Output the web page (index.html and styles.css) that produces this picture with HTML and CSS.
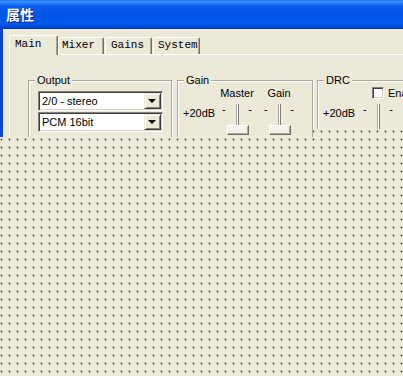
FILE: index.html
```html
<!DOCTYPE html>
<html lang="zh">
<head>
    <meta charset="UTF-8">
    <meta name="viewport" content="width=device-width, initial-scale=1.0">
    <title>属性</title>
    <link rel="stylesheet" href="styles.css">
</head>
<body>
    <div class="window">
        <div class="titlebar"><span class="title">属性</span></div>
        <div class="frame">
            <div class="tabs">
                <div class="tab active">Main</div>
                <div class="tab tab-mixer">Mixer</div>
                <div class="tab tab-gains">Gains</div>
                <div class="tab tab-system">System</div>
            </div>
            <div class="page">
                <fieldset class="group output">
                    <legend>Output</legend>
                    <div class="combo"><span class="value">2/0 - stereo</span><span class="drop"></span></div>
                    <div class="combo"><span class="value">PCM 16bit</span><span class="drop"></span></div>
                </fieldset>
                <fieldset class="group gain">
                    <legend>Gain</legend>
                    <div class="sliders">
                        <div class="db">+20dB</div>
                        <div class="slider">
                            <div class="cap">Master</div>
                            <div class="rail"><span>-</span><span class="track"></span><span>-</span></div>
                            <div class="thumb"></div>
                        </div>
                        <div class="slider second">
                            <div class="cap">Gain</div>
                            <div class="rail"><span>-</span><span class="track"></span><span>-</span></div>
                            <div class="thumb"></div>
                        </div>
                    </div>
                </fieldset>
                <fieldset class="group drc">
                    <legend>DRC</legend>
                    <div class="sliders">
                        <div class="db">+20dB</div>
                        <div class="slider">
                            <div class="cap check-cap"><span class="checkbox"></span>Enable</div>
                            <div class="rail long"><span>-</span><span class="track"></span><span>-</span></div>
                        </div>
                    </div>
                </fieldset>
            </div>
        </div>
    </div>
</body>
</html>
```

FILE: styles.css
```css
body {
    margin: 0;
    width: 403px;
    height: 376px;
    overflow: hidden;
    font-family: "Liberation Sans", Arial, sans-serif;
    font-size: 11px;
    color: #000;
    background-color: #ece9d8;
    background-image: radial-gradient(circle at 1.5px 3.5px, #55544a 0.7px, rgba(236, 233, 216, 0) 1.3px);
    background-size: 8px 8px;
}

.window {
    height: 137px;
    overflow: hidden;
    background: #ece9d8;
    clip-path: polygon(0 0, 100% 0, 100% 129px, 313px 129px, 313px 100%, 0 100%);
}

.titlebar {
    height: 29px;
    display: flex;
    align-items: center;
    padding-left: 6px;
    background: linear-gradient(180deg, #0a5fe9 0, #4096ff 1px, #2d80f8 3px, #0a5ded 6px, #0055e5 50%, #0059ee 84%, #0049d2 93%, #003ab0 100%);
}

.title {
    color: #fff;
    font-family: "Noto Sans CJK SC", sans-serif;
    font-weight: 700;
    font-size: 14px;
    line-height: 15px;
    text-shadow: 1px 1px 0 #0a1c8a;
}

.frame {
    height: 108px;
    border-left: 3px solid #0b47d6;
    padding: 6px 0 0 6px;
}

.tabs {
    display: flex;
    align-items: flex-end;
    height: 19px;
}

.tab {
    box-sizing: border-box;
    height: 17px;
    padding-left: 4px;
    font-family: "Liberation Mono", monospace;
    font-size: 11px;
    line-height: 15px;
    color: #000;
    background: #ece9d8;
    border-top: 1px solid #fff;
    border-left: 1px solid #fff;
    border-right: 1px solid #716f64;
    border-radius: 2px 2px 0 0;
    box-shadow: inset -1px 0 0 #aca899;
}

.tab.active {
    position: relative;
    z-index: 1;
    width: 49px;
    height: 20px;
    margin-bottom: -1px;
    padding-left: 5px;
    line-height: 17px;
}

.tab-mixer {
    width: 46px;
    padding-left: 3px;
}

.tab-gains {
    width: 47px;
    margin-left: 1px;
    padding-left: 5px;
}

.tab-system {
    width: 47px;
    margin-left: 1px;
    padding-left: 4px;
}

.page {
    display: flex;
    align-items: flex-start;
    padding: 18px 0 0 18px;
    border-top: 1px solid #fff;
    border-left: 1px solid #fff;
}

.group {
    flex: none;
    box-sizing: border-box;
    min-width: 0;
    height: 90px;
    margin: 0;
    padding: 0;
    border: 1px solid #aca899;
    box-shadow: inset 1px 1px 0 #fff, 1px 1px 0 #fff;
}

.group legend {
    margin-left: 6px;
    padding: 0 2px;
    line-height: 14px;
    background: #ece9d8;
}

.output {
    width: 144px;
    margin-right: 5px;
    padding-top: 4px;
}

.gain {
    width: 136px;
    margin-right: 4px;
}

.drc {
    width: 150px;
}

.combo {
    box-sizing: border-box;
    display: flex;
    align-items: center;
    width: 125px;
    height: 20px;
    margin: 0 0 1px 9px;
    background: #fff;
    border: 1px solid;
    border-color: #808080 #fff #fff #808080;
    box-shadow: inset 1px 1px 0 #404040, inset -1px -1px 0 #d4d0c8;
}

.combo .value {
    flex: 1;
    padding-left: 3px;
    white-space: nowrap;
}

.drop {
    position: relative;
    box-sizing: border-box;
    width: 17px;
    height: 16px;
    margin-right: 1px;
    background: #ece9d8;
    border: 1px solid;
    border-color: #ece9d8 #404040 #404040 #ece9d8;
    box-shadow: inset 1px 1px 0 #fff, inset -1px -1px 0 #808080;
}

.drop::after {
    content: "";
    position: absolute;
    left: 3px;
    top: 5px;
    border-left: 4px solid transparent;
    border-right: 4px solid transparent;
    border-top: 4px solid #000;
}

.sliders {
    display: flex;
    align-items: flex-start;
    padding-left: 5px;
}

.db {
    width: 36px;
    margin-top: 20px;
    line-height: 13px;
    white-space: nowrap;
}

.drc .db {
    width: 37px;
}

.slider {
    display: flex;
    flex-direction: column;
    align-items: center;
    width: 36px;
}

.slider.second {
    margin-left: 6px;
}

.cap {
    line-height: 13px;
    height: 13px;
    white-space: nowrap;
}

.check-cap {
    display: flex;
    align-self: flex-start;
    margin-left: 12px;
}

.checkbox {
    box-sizing: border-box;
    width: 12px;
    height: 12px;
    margin-right: 4px;
    background: #fff;
    border: 1px solid;
    border-color: #808080 #fff #fff #808080;
    box-shadow: inset 1px 1px 0 #404040, inset -1px -1px 0 #d4d0c8;
}

.rail {
    display: flex;
    justify-content: space-between;
    align-self: stretch;
    height: 25px;
    padding: 0 3px;
    line-height: 13px;
}

.rail span {
    margin-top: 3px;
}

.rail .track {
    box-sizing: border-box;
    width: 3px;
    height: 21px;
    margin-top: 4px;
    background: #fff;
    border-left: 1px solid #aca899;
    border-right: 1px solid #808080;
}

.rail.long {
    height: 40px;
}

.rail.long .track {
    height: 36px;
}

.thumb {
    box-sizing: border-box;
    width: 22px;
    height: 10px;
    margin-left: 2px;
    background: #f3f2ec;
    border: 1px solid;
    border-color: #fff #716f64 #716f64 #fff;
    box-shadow: inset -1px -1px 0 #aca899;
}
```
